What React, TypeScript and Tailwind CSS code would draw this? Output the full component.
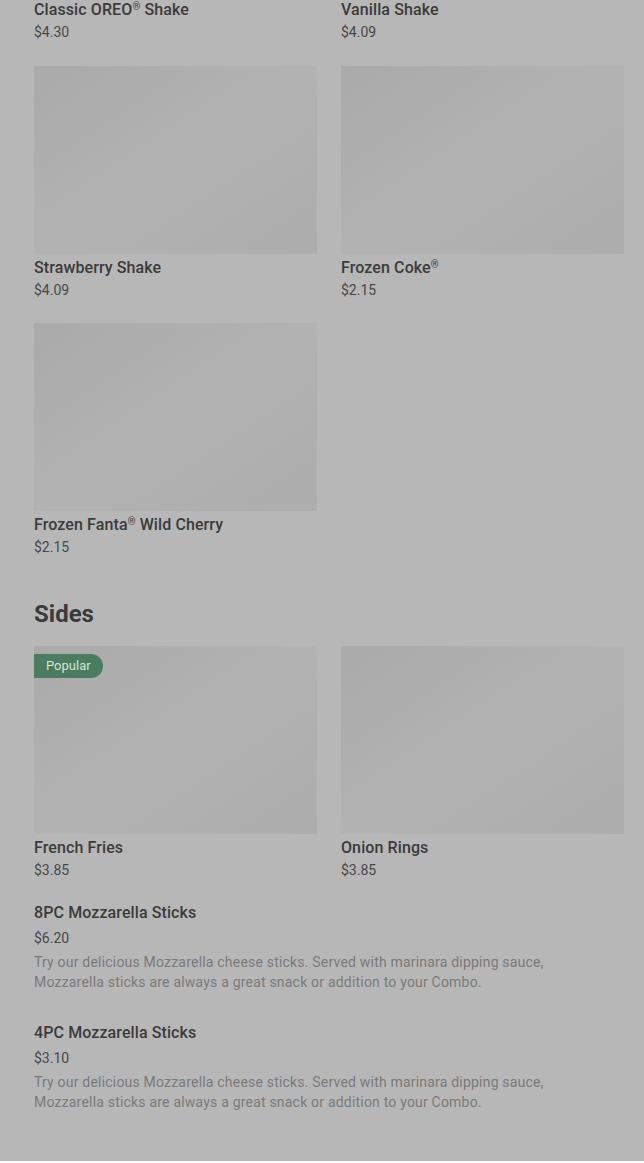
import React from 'react';

interface Item {
  name: string;
  price: string;
  image?: boolean;
  popular?: boolean;
}

const shakes: Item[][] = [
  [
    { name: 'Classic OREO® Shake', price: '$4.30' },
    { name: 'Vanilla Shake', price: '$4.09' },
  ],
  [
    { name: 'Strawberry Shake', price: '$4.09', image: true },
    { name: 'Frozen Coke®', price: '$2.15', image: true },
  ],
  [{ name: 'Frozen Fanta® Wild Cherry', price: '$2.15', image: true }],
];

const sides: Item[] = [
  { name: 'French Fries', price: '$3.85', image: true, popular: true },
  { name: 'Onion Rings', price: '$3.85', image: true },
];

const desc =
  'Try our delicious Mozzarella cheese sticks. Served with marinara dipping sauce, Mozzarella sticks are always a great snack or addition to your Combo.';

const listItems = [
  { name: '8PC Mozzarella Sticks', price: '$6.20' },
  { name: '4PC Mozzarella Sticks', price: '$3.10' },
];

// small raised ® like the original font
const Name: React.FC<{ text: string }> = ({ text }) => {
  const parts = text.split('®');
  return (
    <>
      {parts.map((p, i) => (
        <React.Fragment key={i}>
          {p}
          {i < parts.length - 1 && (
            <span className="relative -top-[5px] text-[10px] leading-none">®</span>
          )}
        </React.Fragment>
      ))}
    </>
  );
};

const Card: React.FC<{ item: Item }> = ({ item }) => (
  <div className="flex flex-col">
    {item.image && (
      <div className="relative h-[188px] w-full bg-gradient-to-br from-[#aaaaaa] via-[#b2b2b2] to-[#adadad]">
        {item.popular && (
          <span className="absolute left-0 top-2 h-6 rounded-r-full bg-[#4b7c5f] px-3 text-[13px] leading-6 text-[#d3e4d8]">
            Popular
          </span>
        )}
      </div>
    )}
    <div className={`${item.image ? 'mt-[2px]' : ''} h-6 text-[16px] font-medium leading-6 tracking-[0.1px] text-[#3b3b3b]`}>
      <Name text={item.name} />
    </div>
    <div className="text-[14px] leading-5 text-[#474747]">{item.price}</div>
  </div>
);

export default function App() {
  return (
    <div className="min-h-[1163px] bg-[#b7b7b7] pl-[34px] pr-5 font-['Roboto','Liberation_Sans',sans-serif]">
      <div className="-mt-[2px] flex flex-col gap-[23px]">
        {shakes.map((row, i) => (
          <div key={i} className={`${i === 1 ? 'mt-px' : ''} grid grid-cols-2 gap-6`}>
            {row.map((item) => (
              <Card key={item.name} item={item} />
            ))}
          </div>
        ))}
      </div>

      <h2 className="mt-[41px] text-[24px] font-bold leading-8 text-[#3a3a3a]">Sides</h2>

      <div className="mt-4 grid grid-cols-2 gap-6">
        {sides.map((item) => (
          <Card key={item.name} item={item} />
        ))}
      </div>

      <div className="mt-[21px] flex flex-col gap-[29px]">
        {listItems.map((it) => (
          <div key={it.name} className="flex flex-col">
            <div className="text-[16px] font-medium leading-6 tracking-[0.1px] text-[#3b3b3b]">{it.name}</div>
            <div className="mt-[3px] text-[14px] leading-5 text-[#474747]">{it.price}</div>
            <p className="mt-1 max-w-[530px] text-[14px] leading-5 tracking-[0.2px] text-[#7a7a7a]">{desc}</p>
          </div>
        ))}
      </div>
    </div>
  );
}
